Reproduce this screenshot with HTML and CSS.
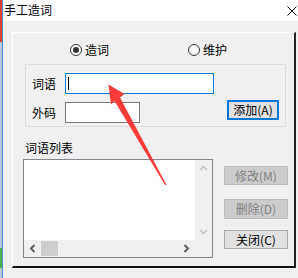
FILE: index.html
```html
<!DOCTYPE html>
<html lang="zh-CN">
<head>
    <meta charset="UTF-8">
    <title>手工造词</title>
    <link rel="stylesheet" href="styles.css">
</head>
<body>
    <div class="desk"></div>

    <div class="window">
        <div class="titlebar">
            <span class="title">手工造词</span>
            <svg class="close" width="10" height="10" viewBox="0 0 10 10">
                <path d="M0.5 0.5 L9.5 9.5 M9.5 0.5 L0.5 9.5" stroke="#000" stroke-width="1" fill="none"/>
            </svg>
        </div>

        <div class="client">
            <div class="frame">
                <div class="modes">
                    <div class="mode first"><span class="dot on"></span>造词</div>
                    <div class="mode"><span class="dot"></span>维护</div>
                </div>

                <div class="group">
                    <div class="line">
                        <span class="label">词语</span>
                        <div class="field wide"><span class="caret"></span></div>
                    </div>
                    <div class="line">
                        <span class="label">外码</span>
                        <div class="field short"></div>
                        <button class="btn add">添加(A)</button>
                    </div>
                </div>

                <div class="list-title">词语列表</div>

                <div class="lower">
                    <div class="listbox">
                        <div class="content"></div>
                        <div class="vbar">
                            <svg width="17" height="17" viewBox="0 0 17 17"><path d="M5 10 L8.5 6.5 L12 10" stroke="#c3c3c3" stroke-width="1.5" fill="none"/></svg>
                            <svg width="17" height="17" viewBox="0 0 17 17"><path d="M5 7 L8.5 10.5 L12 7" stroke="#c3c3c3" stroke-width="1.5" fill="none"/></svg>
                        </div>
                        <div class="hbar">
                            <svg width="17" height="17" viewBox="0 0 17 17"><path d="M10.5 5 L7 8.5 L10.5 12" stroke="#606060" stroke-width="2" fill="none"/></svg>
                            <span class="thumb"></span>
                            <span class="track"></span>
                            <svg width="17" height="17" viewBox="0 0 17 17"><path d="M6.5 5 L10 8.5 L6.5 12" stroke="#606060" stroke-width="2" fill="none"/></svg>
                        </div>
                        <div class="corner"></div>
                    </div>

                    <div class="actions">
                        <button class="btn off">修改(M)</button>
                        <button class="btn off second">删除(D)</button>
                        <button class="btn third">关闭(C)</button>
                    </div>
                </div>
            </div>
        </div>
    </div>

    <!-- red annotation arrow drawn over the dialog -->
    <svg class="mark" width="298" height="278" viewBox="0 0 298 278">
        <polygon points="108.5,84.5 124.5,94 120,97.5 166.5,185 165,185 114.5,101 111,104.5" fill="#fb3a3a"/>
    </svg>
</body>
</html>
```

FILE: styles.css
```css
body {
    margin: 0;
    width: 298px;
    height: 278px;
    display: flex;
    position: relative;
    overflow: hidden;
    background: #f0f0f0;
    font-family: "Noto Sans CJK SC", "Microsoft YaHei", sans-serif;
    font-size: 12px;
    color: #000;
}

.desk {
    width: 2px;
    border-right: 1px solid #4a8fd8;
    background: linear-gradient(#d8432f 0 42px, #b7c5d4 42px 248px, #4fae4c 248px 268px, #b7c5d4 268px);
}

.window {
    flex: 1;
    display: flex;
    flex-direction: column;
}

.titlebar {
    height: 21px;
    background: #ffffff;
    display: flex;
    justify-content: space-between;
    align-items: flex-start;
}

.title {
    padding-left: 1px;
    line-height: 19px;
}

.close {
    margin: 6px 1px 0 0;
}

.client {
    flex: 1;
    background: #f0f0f0;
    padding: 11px 0 0 9px;
}

.frame {
    width: 284px;
    height: 236px;
    box-sizing: border-box;
    border-top: 1px solid #ffffff;
    border-left: 1px solid #ffffff;
    border-right: 2px solid #222;
    border-bottom: 2px solid #111;
}

.modes {
    display: flex;
    padding: 10px 0 0 57px;
}

.mode {
    display: flex;
    align-items: center;
    gap: 3px;
    height: 13px;
    line-height: 13px;
}

.mode.first {
    width: 118px;
}

.dot {
    width: 12px;
    height: 12px;
    box-sizing: border-box;
    border: 1px solid #333;
    border-radius: 50%;
    background: #fff;
    display: flex;
    justify-content: center;
    align-items: center;
}

.dot.on::after {
    content: "";
    width: 6px;
    height: 6px;
    border-radius: 50%;
    background: #333;
}

.group {
    margin: 8px 0 0 12px;
    width: 261px;
    height: 63px;
    box-sizing: border-box;
    border: 1px solid #dcdcdc;
    padding: 8px 0 0 6px;
}

.line {
    display: flex;
    align-items: flex-start;
}

.line + .line {
    margin-top: 8px;
}

.label {
    width: 33px;
    line-height: 21px;
}

.field {
    height: 21px;
    box-sizing: border-box;
    border: 1px solid #7a7a7a;
    background: #fff;
}

.field.wide {
    width: 149px;
    border-color: #0078d7;
}

.field.short {
    width: 75px;
}

.caret {
    display: block;
    width: 1px;
    height: 13px;
    margin: 3px 0 0 2px;
    background: #000;
}

.btn {
    padding: 0;
    box-sizing: border-box;
    font-family: inherit;
    font-size: 12px;
    line-height: 1;
    color: #000;
    background: #e1e1e1;
    border: 1px solid #adadad;
}

.btn.add {
    width: 52px;
    height: 20px;
    margin: -2px 0 0 87px;
    border: 2px solid #0078d7;
}

.list-title {
    margin: 14px 0 0 12px;
    line-height: 14px;
}

.lower {
    display: flex;
    margin: 4px 0 0 10px;
}

.listbox {
    width: 190px;
    height: 99px;
    box-sizing: border-box;
    border: 1px solid #828790;
    background: #fff;
    display: grid;
    grid-template-columns: 1fr 17px;
    grid-template-rows: 1fr 17px;
}

.vbar {
    background: #f0f0f0;
    display: flex;
    flex-direction: column;
    justify-content: space-between;
}

.hbar {
    background: #f0f0f0;
    display: flex;
    align-items: center;
}

.thumb {
    width: 17px;
    height: 15px;
    background: #cdcdcd;
}

.track {
    flex: 1;
}

.corner {
    background: #f0f0f0;
}

.actions {
    width: 64px;
    margin-left: 11px;
    padding-top: 7px;
    display: flex;
    flex-direction: column;
}

.actions .btn {
    height: 19px;
}

.btn.off {
    color: #838383;
    background: #cccccc;
    border-color: #bfbfbf;
}

.btn.second {
    margin-top: 14px;
    height: 20px;
}

.btn.third {
    margin-top: 11px;
}

.mark {
    position: absolute;
    left: 0;
    top: 0;
    pointer-events: none;
}
```
